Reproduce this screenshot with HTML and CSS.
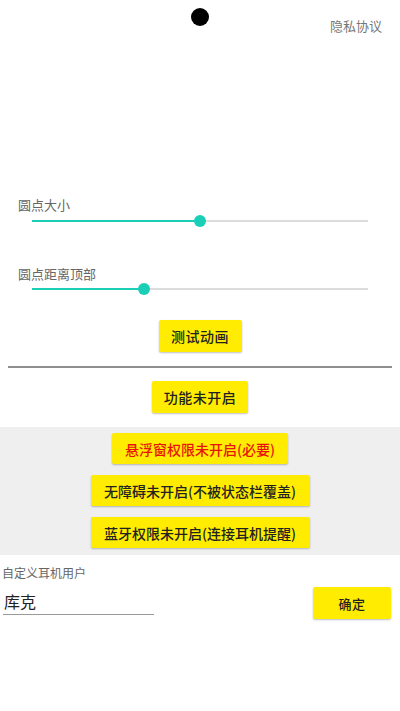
FILE: index.html
```html
<!DOCTYPE html>
<html lang="zh">
<head>
<meta charset="utf-8">
<title>圆点</title>
<link rel="stylesheet" href="styles.css">
</head>
<body>
<div class="page">
  <div class="top">
    <span class="spacer"></span>
    <span class="dot"></span>
    <a class="privacy">隐私协议</a>
  </div>

  <div class="sliders">
    <div class="field first">
      <div class="label">圆点大小</div>
      <div class="slider">
        <div class="track"></div>
        <div class="fill" style="width:50%"></div>
        <div class="thumb" style="left:50%"></div>
      </div>
    </div>
    <div class="field second">
      <div class="label">圆点距离顶部</div>
      <div class="slider">
        <div class="track"></div>
        <div class="fill" style="width:33.3%"></div>
        <div class="thumb" style="left:33.3%"></div>
      </div>
    </div>
  </div>

  <div class="center">
    <button class="btn btn-test">测试动画</button>
  </div>
  <div class="divider"></div>
  <div class="center">
    <button class="btn btn-func">功能未开启</button>
  </div>

  <div class="perms">
    <button class="btn btn-perm btn-float">悬浮窗权限未开启(必要)</button>
    <button class="btn btn-perm btn-wide">无障碍未开启(不被状态栏覆盖)</button>
    <button class="btn btn-perm btn-wide">蓝牙权限未开启(连接耳机提醒)</button>
  </div>

  <div class="custom">
    <div class="custom-label">自定义耳机用户</div>
    <div class="custom-row">
      <div class="input">库克</div>
      <button class="btn btn-ok">确定</button>
    </div>
  </div>
</div>
</body>
</html>
```

FILE: styles.css
```css
html, body {
  margin: 0;
  padding: 0;
  background: #ffffff;
}

body {
  font-family: "Noto Sans CJK SC", "Noto Sans", sans-serif;
  color: #222;
}

.page {
  width: 400px;
  min-height: 711px;
}

.top {
  display: grid;
  grid-template-columns: 1fr auto 1fr;
  height: 40px;
}

.dot {
  display: block;
  width: 18px;
  height: 18px;
  margin-top: 8px;
  border-radius: 50%;
  background: #000;
}

.privacy {
  justify-self: end;
  margin-top: 17px;
  margin-right: 18px;
  font-size: 13px;
  line-height: 18px;
  color: #777;
}

.sliders {
  margin-top: 156px;
}

.label {
  padding-left: 18px;
  font-size: 13px;
  line-height: 17px;
  color: #666;
}

.field.second {
  margin-top: 38px;
}

.slider {
  position: relative;
  height: 12px;
  margin: 2px 32px 0 32px;
}

.field.second .slider {
  margin-top: 1px;
}

.track {
  position: absolute;
  left: 0;
  right: 0;
  top: 5px;
  height: 2px;
  background: #dcdcdc;
}

.fill {
  position: absolute;
  left: 0;
  top: 5px;
  height: 2px;
  background: #1bcfb6;
}

.thumb {
  position: absolute;
  top: 0;
  width: 12px;
  height: 12px;
  margin-left: -6px;
  border-radius: 50%;
  background: #1bcfb6;
}

.center {
  display: flex;
  justify-content: center;
}

.btn {
  display: flex;
  align-items: center;
  justify-content: center;
  padding: 0;
  border: none;
  border-radius: 2px;
  background: #ffec00;
  color: #222;
  font-family: "Noto Sans CJK SC", "Noto Sans", sans-serif;
  font-weight: 500;
  box-shadow: 0 1px 2px rgba(0, 0, 0, 0.25);
}

.btn-test {
  margin-top: 25px;
  width: 83px;
  height: 32px;
  font-size: 14px;
  letter-spacing: 0.5px;
}

.divider {
  margin: 14px 8px 0 8px;
  height: 2px;
  background: #8e8e8e;
}

.btn-func {
  margin-top: 13px;
  width: 96px;
  height: 32px;
  font-size: 14px;
  letter-spacing: 0.5px;
}

.perms {
  margin-top: 14px;
  padding: 6px 0 7px 0;
  background: #efefef;
  display: flex;
  flex-direction: column;
  align-items: center;
  gap: 11px;
}

.btn-perm {
  height: 31px;
  font-size: 14px;
}

.btn-float {
  width: 176px;
  color: #e8140c;
}

.btn-wide {
  width: 219px;
}

.custom {
  padding-top: 10px;
}

.custom-label {
  padding-left: 2px;
  font-size: 12px;
  line-height: 16px;
  color: #666;
}

.custom-row {
  display: flex;
  justify-content: space-between;
  align-items: flex-start;
  margin-top: 6px;
}

.input {
  margin-left: 3px;
  width: 150px;
  padding: 4px 0 3px 1px;
  font-size: 16px;
  line-height: 20px;
  color: #222;
  border-bottom: 1.5px solid #9a9a9a;
}

.btn-ok {
  margin-right: 9px;
  width: 78px;
  height: 32px;
  font-size: 13px;
  letter-spacing: 0.5px;
}
```
